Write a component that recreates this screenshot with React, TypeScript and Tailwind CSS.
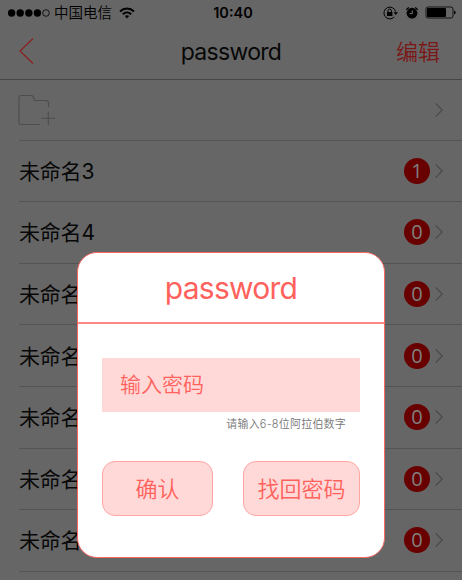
const rows = [
  { name: '未命名3', count: 1 },
  { name: '未命名4', count: 0 },
  { name: '未命名5', count: 0 },
  { name: '未命名6', count: 0 },
  { name: '未命名7', count: 0 },
  { name: '未命名8', count: 0 },
  { name: '未命名9', count: 0 },
];

function Chevron() {
  return (
    <svg width="10" height="16" viewBox="0 0 10 16" fill="none" stroke="#4a4a4a" strokeWidth="1.2">
      <path d="M1.6 1.4L8.2 8L1.6 14.6" />
    </svg>
  );
}

function StatusBar() {
  return (
    <div className="grid h-[25px] grid-cols-[212px_42px_1fr] items-center text-black">
      <div className="flex items-center pl-[8px]">
        <svg width="42" height="8" viewBox="0 0 42 8">
          <circle cx="3.6" cy="4" r="3.7" />
          <circle cx="12.2" cy="4" r="3.7" />
          <circle cx="20.8" cy="4" r="3.7" />
          <circle cx="29.4" cy="4" r="3.7" />
          <circle cx="38" cy="4" r="3.3" fill="none" stroke="#000" strokeWidth="0.8" />
        </svg>
        <span className="ml-[4px] text-[14.5px] font-[350] leading-[20px]">中国电信</span>
        <svg className="ml-[7px]" width="16" height="12" viewBox="0 0 16 12" fill="none" stroke="#000" strokeWidth="2">
          <path d="M1 4.4C5 .6 11 .6 15 4.4" />
          <path d="M3.8 7.2C6.3 4.8 9.7 4.8 12.2 7.2" />
          <path d="M5.8 9.1Q8 7.2 10.2 9.1L8 11.5Z" fill="#000" stroke="none" />
        </svg>
      </div>
      <span className="whitespace-nowrap text-center font-['Inter'] text-[14.5px] font-semibold leading-[20px]">10:40</span>
      <div className="flex items-center justify-end pr-[6px]">
        <svg width="15" height="14" viewBox="0 0 15 14" fill="none" stroke="#000">
          <path d="M11.2 11A5.9 5.9 0 1 1 12.6 5.6" strokeWidth="1" />
          <path d="M10.5 6.2H15L12.7 9Z" fill="#000" stroke="none" />
          <rect x="4" y="6" width="5.4" height="4" fill="#000" stroke="none" />
          <path d="M5 6.2V4.8A1.7 1.7 0 0 1 8.4 4.8V6.2" strokeWidth="1" />
        </svg>
        <svg className="ml-[7px]" width="14" height="14" viewBox="0 0 14 14">
          <circle cx="7" cy="7.2" r="5.4" />
          <path d="M1.4 3.8A7 7 0 0 1 3.9 1.5M10.1 1.5A7 7 0 0 1 12.6 3.8" stroke="#000" strokeWidth="1.3" fill="none" />
          <path d="M7.3 4.4V7.6H4.6" stroke="#777" strokeWidth="1" fill="none" />
        </svg>
        <svg className="ml-[6px]" width="31" height="13" viewBox="0 0 31 13">
          <rect x="1" y="1" width="27" height="11" rx="2" fill="none" stroke="#000" strokeWidth="0.8" />
          <rect x="2" y="2" width="19" height="9" rx="1" />
          <path d="M29 4.4Q30.7 5 30.7 6.5T29 8.6Z" />
        </svg>
      </div>
    </div>
  );
}

export default function App() {
  return (
    <div className="relative h-[580px] w-[462px] overflow-hidden bg-[#666] font-['Inter','Noto_Sans_CJK_SC',sans-serif] text-[#080808]">
      <StatusBar />
      <header className="grid h-[55px] grid-cols-[130px_202px_130px] items-center border-b border-[#464646]">
        <svg className="ml-[19px] -mt-[2px]" width="16" height="28" viewBox="0 0 16 28" fill="none" stroke="#8b2020" strokeWidth="1.2">
          <path d="M14 1.5L1 14L14 26.5" />
        </svg>
        <h1 className="-mt-[1px] text-center text-[23px] font-normal leading-[30px] tracking-[-0.7px]">password</h1>
        <span className="-mt-[1px] pr-[22px] text-right text-[22px] font-[350] leading-[30px] text-[#7c1717]">编辑</span>
      </header>
      <div className="ml-[19px]">
        <div className="flex h-[60.6px] items-center justify-between border-b border-[#545454] pr-[18px]">
          <svg className="-ml-[1px]" width="38" height="32" viewBox="0 0 38 32" fill="none" stroke="#4d4d4d" strokeWidth="1.1">
            <path d="M22 30.5H3Q1 30.5 1 28V4Q1 1.5 3 1.5H13Q15 1.5 15.5 3.5L16.5 6.5H28Q30.5 6.5 30.5 9V13" />
            <path d="M30.3 17.5V31M23.5 24.2H37" />
          </svg>
          <Chevron />
        </div>
        {rows.map((row) => (
          <div key={row.name} className="flex h-[61.6px] items-center border-b border-[#545454] pr-[18px]">
            <span className="pt-[2px] text-[21px] font-normal leading-[30px] tracking-[-0.2px]">{row.name}</span>
            <span className="ml-auto mr-[4px] flex size-[26px] items-center justify-center rounded-full bg-[#680000] font-['Open_Sans'] text-[20px] font-normal leading-[26px] text-[#808080]">
              {row.count}
            </span>
            <Chevron />
          </div>
        ))}
      </div>

      <section className="absolute left-[77px] top-[252px] h-[306px] w-[308px] rounded-[20px] border-[1.5px] border-[#f96863] bg-white text-[#ff615c]">
        <h2 className="flex h-[71px] items-center justify-center border-b-2 border-[#ff8783] pt-[1px] text-[30px] font-normal leading-[40px] tracking-[-0.75px]">password</h2>
        <div className="px-[24px] pt-[34px]">
          <div className="flex h-[54px] items-center bg-[#ffd9d8] pl-[18px] text-[21px] font-[350]">输入密码</div>
          <p className="mt-[4px] pr-[14px] text-right text-[11px] font-[350] leading-[16px] tracking-[0.2px] text-[#757575]">请输入6-8位阿拉伯数字</p>
          <div className="mt-[29px] flex justify-between">
            <button className="h-[55px] w-[111px] rounded-[13px] border border-[#ffa6a3] bg-[#ffd9d8] pt-[1px] text-[22px] font-[350]">确认</button>
            <button className="h-[55px] w-[117px] rounded-[13px] border border-[#ffa6a3] bg-[#ffd9d8] pt-[1px] text-[22px] font-[350]">找回密码</button>
          </div>
        </div>
      </section>
    </div>
  );
}
